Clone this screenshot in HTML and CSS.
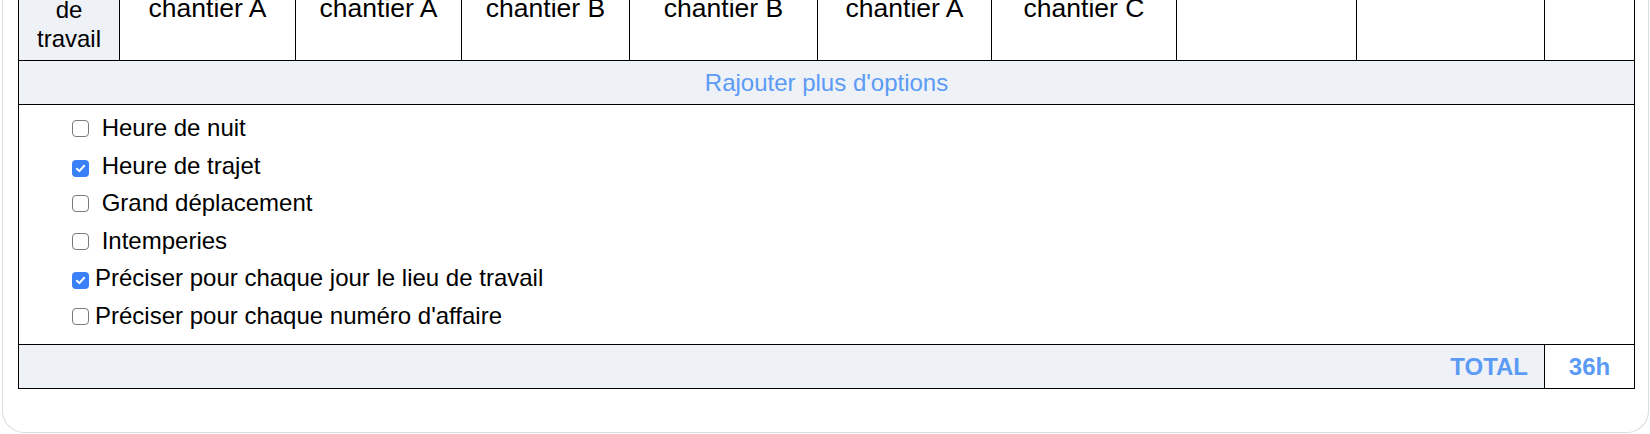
FILE: index.html
```html
<!DOCTYPE html>
<html lang="fr">
<head>
<meta charset="utf-8">
<title>Feuille d'heures</title>
<link rel="stylesheet" href="styles.css">
</head>
<body>
<div class="card">
  <table class="sheet">
    <colgroup>
      <col class="c-head"><col class="c2"><col class="c3"><col class="c4"><col class="c5"><col class="c6"><col class="c7"><col class="c8"><col class="c9"><col class="c10">
    </colgroup>
    <tbody>
      <tr class="place-row">
        <th class="head">Lieu<br>de<br>travail</th>
        <td class="place">chantier A</td>
        <td class="place">chantier A</td>
        <td class="place">chantier B</td>
        <td class="place">chantier B</td>
        <td class="place">chantier A</td>
        <td class="place">chantier C</td>
        <td class="place"></td>
        <td class="place"></td>
        <td class="place"></td>
      </tr>
      <tr>
        <td class="more" colspan="10">Rajouter plus d'options</td>
      </tr>
      <tr>
        <td class="options" colspan="10">
          <label class="opt"><span class="box"></span> Heure de nuit</label>
          <label class="opt"><span class="box checked"><svg viewBox="0 0 16 16" width="13" height="13"><path d="M3.5 8.3 L6.6 11.2 L12.5 4.6" fill="none" stroke="#fff" stroke-width="2.4" stroke-linecap="round" stroke-linejoin="round"/></svg></span> Heure de trajet</label>
          <label class="opt"><span class="box"></span> Grand déplacement</label>
          <label class="opt"><span class="box"></span> Intemperies</label>
          <label class="opt"><span class="box checked"><svg viewBox="0 0 16 16" width="13" height="13"><path d="M3.5 8.3 L6.6 11.2 L12.5 4.6" fill="none" stroke="#fff" stroke-width="2.4" stroke-linecap="round" stroke-linejoin="round"/></svg></span>Préciser pour chaque jour le lieu de travail</label>
          <label class="opt"><span class="box"></span>Préciser pour chaque numéro d'affaire</label>
        </td>
      </tr>
      <tr class="total">
        <td class="total-label" colspan="9">TOTAL</td>
        <td class="total-value">36h</td>
      </tr>
    </tbody>
  </table>
</div>
</body>
</html>
```

FILE: styles.css
```css
html, body {
  margin: 0;
  padding: 0;
  background: #ffffff;
  overflow: hidden;
}

body {
  font-family: "Liberation Sans", Arial, Helvetica, sans-serif;
  font-size: 24px;
  color: #000;
}

.card {
  box-sizing: border-box;
  width: 1647px;
  margin: -40px 0 0 2px;
  padding: 0 13px 43px 15px;
  border: 1px solid #dcdcdc;
  border-top: none;
  border-radius: 0 0 22px 22px;
  background: #fff;
}

.sheet {
  width: 1617px;
  table-layout: fixed;
  border-collapse: collapse;
}

.c-head { width: 101px; }
.c2 { width: 176px; }
.c3 { width: 166px; }
.c4 { width: 168px; }
.c5 { width: 188px; }
.c6 { width: 174px; }
.c7 { width: 185px; }
.c8 { width: 180px; }
.c9 { width: 188px; }
.c10 { width: 90px; }

.sheet th,
.sheet td {
  border: 1px solid #000;
  padding: 0;
}

.sheet .head {
  background: #eef1f6;
  font-weight: normal;
  font-size: 24px;
  line-height: 28.8px;
  padding: 6px 4px 7px;
  text-align: center;
  vertical-align: middle;
}

.sheet .place {
  font-size: 26.5px;
  line-height: 30px;
  text-align: center;
  vertical-align: middle;
  padding: 0 6px 5px;
}

.sheet .more {
  background: #eef1f6;
  color: #5b9bf5;
  text-align: center;
  line-height: 28px;
  padding: 7.5px 0;
}

.sheet .options {
  padding: 4px 0 10px 53px;
}

.opt {
  display: block;
  height: 37.5px;
  line-height: 37.5px;
  white-space: nowrap;
}

.box {
  display: inline-flex;
  align-items: center;
  justify-content: center;
  box-sizing: border-box;
  width: 17px;
  height: 17px;
  margin-right: 6px;
  border: 1.5px solid #7a7a7a;
  border-radius: 4px;
  background: #fff;
  vertical-align: -1px;
}

.box.checked {
  border: none;
  background: #3a80f6;
}

.box svg {
  display: block;
}

.sheet .total td {
  line-height: 28px;
  padding: 7.5px 0;
  color: #5b9bf5;
  font-weight: bold;
}

.sheet .total .total-label {
  background: #eef1f6;
  text-align: right;
  padding-right: 16px;
}

.sheet .total .total-value {
  background: #fff;
  text-align: center;
}
```
